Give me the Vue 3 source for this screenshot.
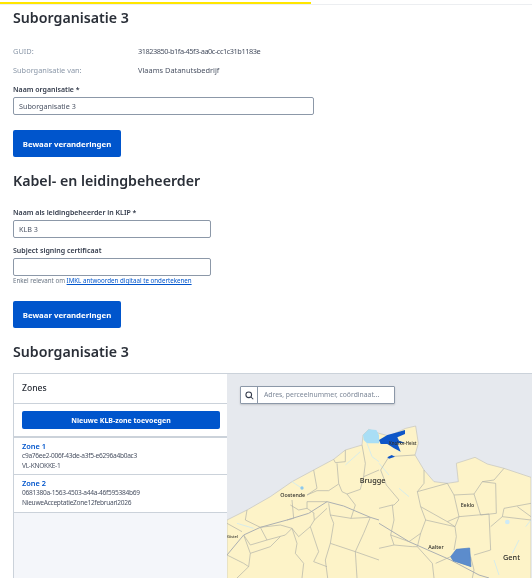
<template>
  <div class="page">
    <div class="progress"><div class="progress-fill"></div></div>

    <div class="content">
      <h1 class="title">Suborganisatie 3</h1>

      <div class="data-row first">
        <span class="data-label">GUID:</span>
        <span class="data-value guid">31823850-b1fa-45f3-aa0c-cc1c31b1183e</span>
      </div>
      <div class="data-row">
        <span class="data-label">Suborganisatie van:</span>
        <span class="data-value">Vlaams Datanutsbedrijf</span>
      </div>

      <label class="field-label org-label">Naam organisatie *</label>
      <input class="input input-wide" type="text" value="Suborganisatie 3" />

      <button class="btn btn-save">Bewaar veranderingen</button>

      <h2 class="title klb-title">Kabel- en leidingbeheerder</h2>

      <label class="field-label klb-label">Naam als leidingbeheerder in KLIP *</label>
      <input class="input input-small" type="text" value="KLB 3" />

      <label class="field-label cert-label">Subject signing certificaat</label>
      <input class="input input-small" type="text" />
      <p class="help">Enkel relevant om <a href="#">IMKL antwoorden digitaal te ondertekenen</a></p>

      <button class="btn btn-save second">Bewaar veranderingen</button>

      <h2 class="title zones-title">Suborganisatie 3</h2>
    </div>

    <div class="panel">
      <aside class="sidebar">
        <div class="side-head">Zones</div>
        <div class="side-action">
          <button class="btn btn-add">Nieuwe KLB-zone toevoegen</button>
        </div>
        <div v-for="zone in zones" :key="zone.id" class="zone">
          <a href="#" class="zone-name">{{ zone.name }}</a>
          <div class="zone-line">{{ zone.id }}</div>
          <div class="zone-line">{{ zone.ref }}</div>
        </div>
      </aside>

      <div class="map">
        <svg class="map-svg" viewBox="0 12 912 612" width="304" height="204">
          <rect y="12" width="912" height="612" fill="#e6e9ee" />
          <path class="land" d="M0 450 L60 420 L130 380 L195 335 L260 300 L320 268 L355 240 L405 225 L408 195 L425 178 L456 190 L486 198 L536 175 L566 168 L574 220 L564 255 L591 300 L621 335 L661 340 L694 335 L688 280 L744 262 L781 282 L831 295 L912 322 L912 640 L0 640 Z" />
          <!-- linkerhelft kaart -->
          <g transform="translate(0,150)">
            <path class="water" d="M408 45 L425 28 L448 30 L456 45 L456 70 L420 70 L410 60 Z" />
            <path class="water-line" d="M355 135 L400 95 M195 185 L225 205 M30 310 L80 325 M420 70 L435 110 L456 125" />
            <circle cx="225" cy="204" r="5" fill="#8cc8ec" />
            <g class="borders">
              <path d="M355 90 L355 125 L325 128 L320 118 M330 130 L335 190 L345 215 L360 222 L400 208 L410 170" />
              <path d="M405 75 L415 130 L410 170 L456 150" />
              <path d="M260 150 L270 205 L240 225 L270 212 L305 212 L335 192" />
              <path d="M360 222 L385 255 L372 295 L310 285 L305 250 M372 295 L430 292" />
              <path d="M430 292 L410 340 L385 395 L390 474" />
              <path d="M310 285 L320 310 L310 370 L325 375 L385 395 M310 370 L295 420 L302 474" />
              <path d="M260 280 L262 300 L250 320 L275 395 L260 425 L300 440" />
              <path d="M250 320 L215 350 L195 325 L160 315 L100 322 M195 325 L210 370 L205 400 L230 430 L225 474" />
              <path d="M100 322 L120 360 L70 375 L50 345 M120 360 L175 345 L195 325" />
              <path d="M50 345 L70 400 L65 440 L30 474 M0 405 L50 430 L65 440" />
              <path d="M60 270 L55 300 L100 322 M0 310 L45 335 M195 240 L200 295 L180 300" />
              <path d="M190 255 L215 270 L240 265 L240 245 L300 245 M300 265 L262 300 M240 265 L262 280" />
              <path d="M70 400 L130 380 L160 350 M385 395 L456 420" />
            </g>
            <path class="road" d="M0 405 L50 345 L100 322 L180 300 L245 280 L300 245 L350 258 L430 292 L456 300" />
          </g>
          <!-- rechterhelft kaart -->
          <g transform="translate(456,150)">
            <path class="water-line" d="M0 130 L30 165 M60 205 L90 230 M400 400 L420 360 M345 420 L360 465 M440 320 L456 300" />
            <circle cx="385" cy="306" r="7" fill="#cdeaf7" />
            <g class="borders">
              <path d="M108 105 L30 110 L5 150 L22 195 L60 240 L45 255 L40 255 L0 265" />
              <path d="M135 150 L135 190 L115 215 L125 260 L140 300 L125 340 L90 365 L35 345 L45 300 L40 255" />
              <path d="M205 190 L225 225 L240 290 L205 305 L228 320 L240 290 L330 282" />
              <path d="M225 225 L285 222 L310 185 L350 190 L352 280 L305 285 M285 222 L305 285" />
              <path d="M375 145 L345 180 L310 185 M115 215 L205 190 M125 260 L205 305 M140 300 L228 320" />
              <path d="M228 320 L232 350 L225 390 M330 282 L335 390 L285 405" />
              <path d="M335 320 L370 290 L375 265 L456 250 M415 260 L456 290 M370 290 L456 300" />
              <path d="M125 340 L115 380 L160 430 L165 474 M35 345 L45 375 L0 385" />
              <path d="M215 410 L170 430 M275 410 L285 450 L280 474 M45 375 L100 380 L115 380" />
            </g>
            <path class="road" d="M0 310 L90 365 L215 420 L300 465 L330 474" />
            <path class="zone-dark" d="M0 60 L25 45 L50 38 L78 30 L78 42 L55 52 L60 62 L78 68 L55 70 L65 95 L45 85 L25 72 L5 72 Z" />
            <path class="zone-dark" d="M25 112 L38 105 L48 110 L30 116 Z" />
            <path class="zone-soft" d="M215 410 L232 388 L272 384 L276 440 L240 428 L222 422 Z" />
          </g>
          <text class="town small" x="486" y="225">Knokke-Heist</text>
          <text class="town big" x="398" y="340">Brugge</text>
          <text class="town" x="160" y="380">Oostende</text>
          <text class="town" x="701" y="410">Eeklo</text>
          <text class="town" x="604" y="537">Aalter</text>
          <text class="town big" x="828" y="570">Gent</text>
          <text class="town tiny" x="0" y="505">Gistel</text>
        </svg>

        <div class="search">
          <span class="search-icon">
            <svg width="9" height="9" viewBox="0 0 12 12" fill="none" stroke="#333b4b" stroke-width="1.4">
              <circle cx="5" cy="5" r="3.8"></circle>
              <path d="M8 8 L11 11"></path>
            </svg>
          </span>
          <span class="search-text">Adres, perceelnummer, coördinaat...</span>
        </div>
      </div>
    </div>
  </div>
</template>

<script setup>
const zones = [
  { name: 'Zone 1', id: 'c9a76ee2-006f-43de-a3f5-e6296a4b0ac3', ref: 'VL-KNOKKE-1' },
  { name: 'Zone 2', id: '0681380a-1563-4503-a44a-46f595384b69', ref: 'NieuweAcceptatieZone12februari2026' }
]
</script>

<style>
html, body {
  margin: 0;
  background: #fff;
  overflow: hidden;
}
</style>

<style scoped>
.page {
  width: 532px;
  height: 578px;
  overflow: hidden;
  font-family: "Noto Sans", sans-serif;
  color: #2e3440;
  filter: blur(0.35px);
}

.progress {
  height: 2px;
  margin-top: 2px;
  border-bottom: 1px solid #eceef1;
}

.progress-fill {
  width: 311px;
  height: 2px;
  background: #ffe600;
}

.content {
  padding-left: 13px;
}

.title {
  margin: 0;
  font-size: 14.2px;
  line-height: 20px;
  font-weight: 600;
  color: #2a2f38;
}

.content > .title:first-child {
  padding-top: 3px;
}

.data-row {
  display: flex;
  font-size: 7.4px;
  line-height: 12px;
  margin-top: 7px;
}

.data-row.first {
  margin-top: 17px;
}

.data-label {
  width: 125px;
  color: #8a97a8;
}

.data-value {
  color: #4a5263;
}

.guid {
  letter-spacing: -0.47px;
}

.field-label {
  display: block;
  font-size: 7px;
  line-height: 12px;
  font-weight: 600;
  color: #333b4b;
}

.org-label {
  margin-top: 8px;
  margin-bottom: 1px;
}

.input {
  display: block;
  box-sizing: border-box;
  height: 18px;
  padding: 0 5px;
  border: 1px solid #8c98a8;
  border-radius: 2px;
  background: #fff;
  font-family: inherit;
  font-size: 7.2px;
  color: #4a5263;
  outline: none;
}

.input-wide {
  width: 301px;
}

.input-small {
  width: 198px;
}

.btn {
  display: block;
  border: none;
  border-radius: 2px;
  background: #0055cc;
  color: #fff;
  font-family: inherit;
  font-weight: 700;
  cursor: pointer;
}

.btn-save {
  width: 108px;
  height: 27px;
  margin-top: 15px;
  font-size: 7.8px;
  padding: 0;
}

.btn-save.second {
  margin-top: 16px;
}

.klb-title {
  margin-top: 14px;
}

.klb-label {
  margin-top: 16px;
  margin-bottom: 1px;
}

.cert-label {
  margin-top: 7px;
  margin-bottom: 1px;
}

.help {
  margin: 0;
  font-size: 6.2px;
  line-height: 9px;
  color: #687483;
}

.help a {
  color: #0055cc;
}

.zones-title {
  margin-top: 14px;
}

.panel {
  display: flex;
  box-sizing: border-box;
  width: 519px;
  height: 205px;
  margin-left: 13px;
  margin-top: 11px;
  border-top: 1px solid #cbd2da;
  border-left: 1px solid #cbd2da;
}

.sidebar {
  flex: none;
  width: 213px;
  background: #f4f6fa;
}

.side-head {
  box-sizing: border-box;
  height: 30px;
  padding: 0 8px;
  background: #fff;
  border-bottom: 1px solid #cbd2da;
  font-size: 8.6px;
  line-height: 29px;
  font-weight: 500;
  color: #2a2f38;
}

.side-action {
  box-sizing: border-box;
  height: 34px;
  padding: 7px 7px 0 8px;
  background: #fff;
  border-bottom: 2px solid #cbd2da;
}

.btn-add {
  width: 198px;
  height: 18px;
  padding: 0;
  font-size: 7px;
}

.zone {
  box-sizing: border-box;
  height: 37px;
  padding: 3px 8px 0;
  background: #fff;
  border-bottom: 1px solid #cbd2da;
}

.zone:last-child {
  height: 38px;
}

.zone-name {
  display: block;
  font-size: 7.4px;
  line-height: 10px;
  font-weight: 600;
  color: #0055cc;
  text-decoration: none;
}

.zone-line {
  font-size: 6.6px;
  line-height: 10px;
  letter-spacing: -0.28px;
  color: #4a5263;
}

.map {
  position: relative;
  flex: 1;
  overflow: hidden;
  background: #e6e9ee;
}

.map-svg {
  display: block;
}

.land {
  fill: #fdf3c8;
  stroke: #c2c3bd;
  stroke-width: 2;
}

.water {
  fill: #a9def5;
}

.water-line {
  fill: none;
  stroke: #cfeaf0;
  stroke-width: 2.5;
}

.borders path {
  fill: none;
  stroke: #aeafa8;
  stroke-width: 2;
  stroke-linejoin: round;
}

.road {
  fill: none;
  stroke: #acb0b2;
  stroke-width: 3;
}

.zone-dark {
  fill: #0e56c8;
}

.zone-soft {
  fill: #5c8ccc;
  stroke: #4b7fc6;
  stroke-width: 2;
}

.town {
  font-family: "Noto Sans", sans-serif;
  font-size: 16px;
  font-weight: 500;
  fill: #2e2e2a;
}

.town.small {
  font-size: 13px;
}

.town.tiny {
  font-size: 12px;
}

.town.big {
  font-size: 22px;
}

.search {
  position: absolute;
  top: 12px;
  left: 13px;
  display: flex;
  box-sizing: border-box;
  width: 155px;
  height: 18px;
  background: #fff;
  border: 1px solid #8c98a8;
  border-radius: 1px;
  box-shadow: 0 1px 2px rgba(0, 0, 0, 0.15);
}

.search-icon {
  flex: none;
  display: flex;
  align-items: center;
  justify-content: center;
  box-sizing: border-box;
  width: 17px;
  border-right: 1px solid #8c98a8;
}

.search-text {
  padding-left: 6px;
  font-size: 6.8px;
  line-height: 16px;
  color: #7b8696;
  white-space: nowrap;
}
</style>
